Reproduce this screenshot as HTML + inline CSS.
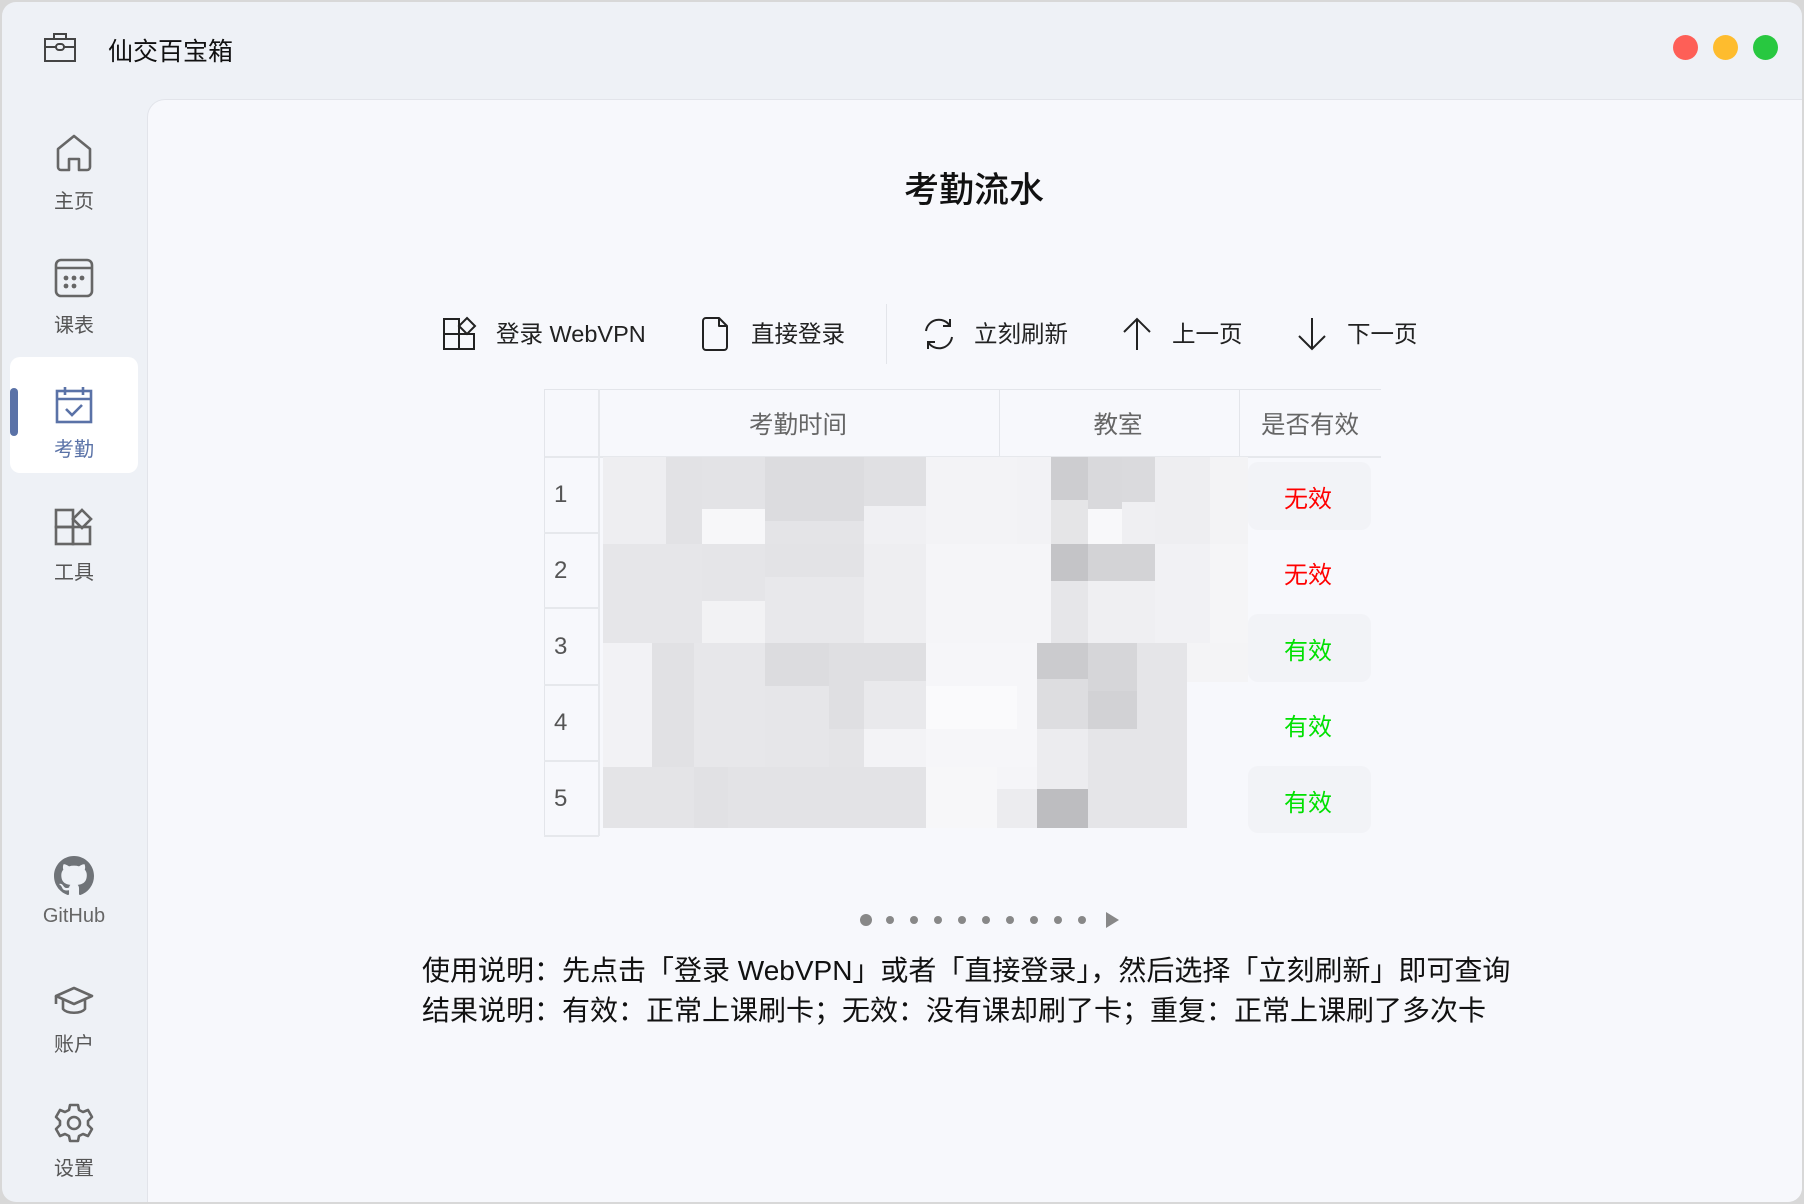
<!DOCTYPE html>
<html><head><meta charset="utf-8"><style>
*{margin:0;padding:0;box-sizing:border-box}
body{width:1804px;height:1204px;background:#d8d8d8;font-family:"Liberation Sans","Noto Sans CJK SC",sans-serif;position:relative;overflow:hidden}
.win{position:absolute;left:2px;top:2px;width:1800px;height:1200px;background:#eef1f6;border-radius:14px;overflow:hidden}
.abs{position:absolute}
.panel{position:absolute;left:145px;top:97px;width:1657px;height:1105px;background:#f7f8fc;border-left:1px solid #e2e4ea;border-top:1px solid #e2e4ea;border-top-left-radius:18px}
.lbl{position:absolute;width:100px;text-align:center;font-size:20px;color:#555;left:22px}
.ico{position:absolute;left:52px;width:40px;height:40px}
.tb{position:absolute;font-size:23.5px;color:#222;top:318px;line-height:32px;white-space:nowrap}
.tbi{position:absolute;top:316px;width:36px;height:36px}
.m{position:absolute}
.rn{position:absolute;left:554px;font-size:24px;color:#555}
.st{position:absolute;left:1282px;font-size:24px}
.dot{position:absolute;width:8px;height:8px;border-radius:50%;background:#888;top:916px}
</style></head><body>
<div class="win">
<svg class="abs" style="left:41px;top:29px" width="34" height="34" viewBox="0 0 34 34" fill="none" stroke="#444" stroke-width="2"><rect x="2" y="8" width="30" height="22"/><path d="M11 8V3h12v5M2 16h11M21 16h11"/><rect x="13" y="13" width="8" height="6" rx="3"/></svg>
<div class="abs" style="left:106px;top:30px;font-size:25px;color:#111">仙交百宝箱</div>
<div class="abs" style="left:1671px;top:33px;width:25px;height:25px;border-radius:50%;background:#fe5f57"></div>
<div class="abs" style="left:1711px;top:33px;width:25px;height:25px;border-radius:50%;background:#febc2e"></div>
<div class="abs" style="left:1751px;top:33px;width:25px;height:25px;border-radius:50%;background:#28c840"></div>

<svg class="ico" style="top:131px" viewBox="0 0 40 40" fill="none" stroke="#666" stroke-width="2.6" stroke-linejoin="round"><path d="M4 16L20 3l16 13v18a3 3 0 0 1-3 3h-8V26h-10v11H7a3 3 0 0 1-3-3z"/></svg>
<div class="lbl" style="top:183px">主页</div>
<svg class="ico" style="top:256px" viewBox="0 0 40 40" fill="none" stroke="#666" stroke-width="2.6"><rect x="2" y="2" width="36" height="36" rx="5"/><path d="M2 10h36"/><g fill="#666" stroke="none"><circle cx="12" cy="20" r="2.4"/><circle cx="20" cy="20" r="2.4"/><circle cx="28" cy="20" r="2.4"/><circle cx="12" cy="28" r="2.4"/><circle cx="20" cy="28" r="2.4"/></g></svg>
<div class="lbl" style="top:307px">课表</div>
<div class="abs" style="left:8px;top:355px;width:128px;height:116px;background:#fff;border-radius:10px"></div>
<div class="abs" style="left:8px;top:386px;width:8px;height:48px;background:#5a72a7;border-radius:4px"></div>
<svg class="ico" style="top:383px" viewBox="0 0 40 40" fill="none" stroke="#5a72a7" stroke-width="2.6"><rect x="3" y="6" width="34" height="31"/><path d="M3 14h34M11 2v8M29 2v8M12 24l6 6 10-10"/></svg>
<div class="lbl" style="top:431px;color:#5a72a7">考勤</div>
<svg class="ico" style="top:505px" viewBox="0 0 40 40" fill="none" stroke="#666" stroke-width="2.6"><rect x="2" y="20" width="17" height="17"/><rect x="19" y="20" width="17" height="17"/><rect x="2" y="3" width="17" height="17"/><path d="M28 3l9 9-9 9-9-9z"/></svg>
<div class="lbl" style="top:554px">工具</div>
<svg class="ico" style="top:854px" viewBox="0 0 16 16"><path fill="#6f7378" d="M8 0C3.58 0 0 3.58 0 8c0 3.54 2.29 6.53 5.47 7.59.4.07.55-.17.55-.38 0-.19-.01-.82-.01-1.49-2.01.37-2.53-.49-2.69-.94-.09-.23-.48-.94-.82-1.13-.28-.15-.68-.52-.01-.53.63-.01 1.08.58 1.23.82.72 1.21 1.87.87 2.33.66.07-.52.28-.87.51-1.07-1.78-.2-3.64-.89-3.64-3.95 0-.87.31-1.59.82-2.15-.08-.2-.36-1.02.08-2.12 0 0 .67-.21 2.2.82.64-.18 1.32-.27 2-.27.68 0 1.36.09 2 .27 1.53-1.04 2.2-.82 2.2-.82.44 1.1.16 1.92.08 2.12.51.56.82 1.27.82 2.15 0 3.07-1.87 3.75-3.65 3.95.29.25.54.73.54 1.48 0 1.07-.01 1.93-.01 2.2 0 .21.15.46.55.38A8.013 8.013 0 0016 8c0-4.42-3.58-8-8-8z"/></svg>
<div class="lbl" style="top:903px;color:#666">GitHub</div>
<svg class="ico" style="top:980px" viewBox="0 0 40 40" fill="none" stroke="#666" stroke-width="2.6" stroke-linejoin="round"><path d="M2 14L20 6l18 8-18 8z"/><path d="M9 18v9c4 5 18 5 22 0v-9M2 14v8"/></svg>
<div class="lbl" style="top:1026px">账户</div>
<svg class="ico" style="top:1101px" viewBox="0 0 40 40" fill="none" stroke="#666" stroke-width="2.6" stroke-linejoin="round"><path d="M16 2h8l1 5 4 2 5-2 4 7-4 4v4l4 4-4 7-5-2-4 2-1 5h-8l-1-5-4-2-5 2-4-7 4-4v-4L2 14l4-7 5 2 4-2z"/><circle cx="20" cy="20" r="6"/></svg>
<div class="lbl" style="top:1150px">设置</div>

<div class="panel"></div>
</div>

<div class="abs" style="left:874px;top:162px;width:200px;text-align:center;font-size:35px;color:#111;font-weight:500">考勤流水</div>

<svg class="tbi" style="left:442px" viewBox="0 0 36 36" fill="none" stroke="#222" stroke-width="2"><rect x="2" y="18" width="15" height="15"/><rect x="17" y="18" width="15" height="15"/><rect x="2" y="3" width="15" height="15"/><path d="M25 2l8 8-8 8-8-8z"/></svg>
<div class="tb" style="left:496px">登录 WebVPN</div>
<svg class="tbi" style="left:698px" viewBox="0 0 36 36" fill="none" stroke="#222" stroke-width="2" stroke-linejoin="round"><path d="M8 2h13l8 8v21a3 3 0 0 1-3 3H8a3 3 0 0 1-3-3V5a3 3 0 0 1 3-3z"/><path d="M21 2v8h8"/></svg>
<div class="tb" style="left:751px">直接登录</div>
<div class="abs" style="left:886px;top:304px;width:1px;height:60px;background:#e3e5ea"></div>
<svg class="tbi" style="left:921px" viewBox="0 0 36 36" fill="none" stroke="#222" stroke-width="2"><path d="M5 15A13 13 0 0 1 29 10M31 21A13 13 0 0 1 7 26"/><path d="M29 3v7h-7M7 33v-7h7"/></svg>
<div class="tb" style="left:974px">立刻刷新</div>
<svg class="tbi" style="left:1119px" viewBox="0 0 36 36" fill="none" stroke="#222" stroke-width="2"><path d="M18 34V3M5 16L18 3l13 13"/></svg>
<div class="tb" style="left:1172px">上一页</div>
<svg class="tbi" style="left:1294px" viewBox="0 0 36 36" fill="none" stroke="#222" stroke-width="2"><path d="M18 2v31M5 20l13 13 13-13"/></svg>
<div class="tb" style="left:1347px">下一页</div>

<div class="abs" style="left:544px;top:389px;width:837px;height:1px;background:#e3e5ea"></div>
<div class="abs" style="left:544px;top:456px;width:837px;height:2px;background:#e6e8ec"></div>
<div class="abs" style="left:544px;top:389px;width:1px;height:447px;background:#e3e5ea"></div>
<div class="abs" style="left:598px;top:389px;width:2px;height:447px;background:#e6e8ec"></div>
<div class="abs" style="left:999px;top:389px;width:1px;height:67px;background:#e3e5ea"></div>
<div class="abs" style="left:1239px;top:389px;width:1px;height:67px;background:#e3e5ea"></div>
<div class="abs" style="left:544px;top:532px;width:55px;height:2px;background:#e6e8ec"></div>
<div class="abs" style="left:544px;top:607px;width:55px;height:2px;background:#e6e8ec"></div>
<div class="abs" style="left:544px;top:684px;width:55px;height:2px;background:#e6e8ec"></div>
<div class="abs" style="left:544px;top:760px;width:55px;height:2px;background:#e6e8ec"></div>
<div class="abs" style="left:544px;top:835px;width:55px;height:2px;background:#e6e8ec"></div>
<div class="abs" style="left:698px;top:406px;width:200px;text-align:center;font-size:24.5px;color:#666">考勤时间</div>
<div class="abs" style="left:1068px;top:406px;width:100px;text-align:center;font-size:24.5px;color:#666">教室</div>
<div class="abs" style="left:1250px;top:406px;width:120px;text-align:center;font-size:24.5px;color:#666">是否有效</div>

<div class="abs" style="left:1248px;top:462px;width:123px;height:68px;background:#f2f3f7;border-radius:10px"></div>
<div class="abs" style="left:1248px;top:614px;width:123px;height:68px;background:#f2f3f7;border-radius:10px"></div>
<div class="abs" style="left:1248px;top:766px;width:123px;height:67px;background:#f2f3f7;border-radius:10px"></div>

<div class="m" style="left:603px;top:457px;width:63px;height:87px;background:#eeeef1"></div>
<div class="m" style="left:666px;top:457px;width:36px;height:87px;background:#e2e2e5"></div>
<div class="m" style="left:702px;top:457px;width:63px;height:52px;background:#e3e3e6"></div>
<div class="m" style="left:702px;top:509px;width:63px;height:35px;background:#f7f7f9"></div>
<div class="m" style="left:765px;top:457px;width:99px;height:64px;background:#dcdcdf"></div>
<div class="m" style="left:765px;top:521px;width:99px;height:23px;background:#e4e4e7"></div>
<div class="m" style="left:864px;top:457px;width:62px;height:49px;background:#e0e0e3"></div>
<div class="m" style="left:864px;top:506px;width:62px;height:38px;background:#f0f0f3"></div>
<div class="m" style="left:926px;top:457px;width:91px;height:87px;background:#f3f3f6"></div>
<div class="m" style="left:1017px;top:457px;width:34px;height:87px;background:#f2f2f5"></div>
<div class="m" style="left:1051px;top:457px;width:37px;height:43px;background:#cdcdd0"></div>
<div class="m" style="left:1051px;top:500px;width:37px;height:44px;background:#e5e5e7"></div>
<div class="m" style="left:1088px;top:457px;width:34px;height:52px;background:#d9d9dc"></div>
<div class="m" style="left:1088px;top:509px;width:34px;height:35px;background:#f8f8fa"></div>
<div class="m" style="left:1122px;top:457px;width:33px;height:45px;background:#dadadd"></div>
<div class="m" style="left:1122px;top:502px;width:33px;height:42px;background:#efeff2"></div>
<div class="m" style="left:1155px;top:457px;width:55px;height:87px;background:#eeeef1"></div>
<div class="m" style="left:1210px;top:457px;width:38px;height:87px;background:#f3f3f5"></div>

<div class="m" style="left:603px;top:544px;width:99px;height:99px;background:#e6e6e9"></div>
<div class="m" style="left:702px;top:544px;width:63px;height:57px;background:#e5e5e8"></div>
<div class="m" style="left:702px;top:601px;width:63px;height:42px;background:#f2f2f4"></div>
<div class="m" style="left:765px;top:544px;width:99px;height:33px;background:#e3e3e6"></div>
<div class="m" style="left:765px;top:577px;width:99px;height:66px;background:#e8e8eb"></div>
<div class="m" style="left:864px;top:544px;width:62px;height:99px;background:#eeeef1"></div>
<div class="m" style="left:926px;top:544px;width:125px;height:99px;background:#f5f5f8"></div>
<div class="m" style="left:1051px;top:544px;width:37px;height:37px;background:#c4c4c7"></div>
<div class="m" style="left:1051px;top:581px;width:37px;height:62px;background:#e6e6e9"></div>
<div class="m" style="left:1088px;top:544px;width:67px;height:37px;background:#d3d3d6"></div>
<div class="m" style="left:1088px;top:581px;width:67px;height:62px;background:#efeff2"></div>
<div class="m" style="left:1155px;top:544px;width:55px;height:99px;background:#f1f1f4"></div>
<div class="m" style="left:1210px;top:544px;width:38px;height:99px;background:#f5f5f7"></div>

<div class="m" style="left:603px;top:643px;width:49px;height:124px;background:#f2f2f5"></div>
<div class="m" style="left:652px;top:643px;width:42px;height:124px;background:#e1e1e4"></div>
<div class="m" style="left:694px;top:643px;width:71px;height:124px;background:#e7e7ea"></div>
<div class="m" style="left:765px;top:643px;width:64px;height:43px;background:#dcdcdf"></div>
<div class="m" style="left:765px;top:686px;width:64px;height:81px;background:#e6e6e9"></div>
<div class="m" style="left:829px;top:643px;width:35px;height:86px;background:#dfdfe2"></div>
<div class="m" style="left:829px;top:729px;width:35px;height:38px;background:#e4e4e7"></div>
<div class="m" style="left:864px;top:643px;width:62px;height:38px;background:#dfdfe2"></div>
<div class="m" style="left:864px;top:681px;width:62px;height:48px;background:#e9e9ec"></div>
<div class="m" style="left:864px;top:729px;width:62px;height:38px;background:#f3f3f6"></div>
<div class="m" style="left:926px;top:643px;width:111px;height:124px;background:#f6f6f9"></div>
<div class="m" style="left:926px;top:686px;width:91px;height:43px;background:#fafafc"></div>
<div class="m" style="left:1037px;top:643px;width:51px;height:36px;background:#cbcbce"></div>
<div class="m" style="left:1037px;top:679px;width:51px;height:50px;background:#dddde0"></div>
<div class="m" style="left:1037px;top:729px;width:51px;height:38px;background:#ececef"></div>
<div class="m" style="left:1088px;top:643px;width:49px;height:48px;background:#d6d6d9"></div>
<div class="m" style="left:1088px;top:691px;width:49px;height:38px;background:#d2d2d5"></div>
<div class="m" style="left:1088px;top:729px;width:49px;height:38px;background:#e5e5e8"></div>
<div class="m" style="left:1137px;top:643px;width:50px;height:124px;background:#e5e5e8"></div>
<div class="m" style="left:1187px;top:643px;width:61px;height:39px;background:#f4f4f6"></div>

<div class="m" style="left:603px;top:767px;width:91px;height:61px;background:#e4e4e7"></div>
<div class="m" style="left:694px;top:767px;width:34px;height:61px;background:#e1e1e4"></div>
<div class="m" style="left:728px;top:767px;width:198px;height:61px;background:#e3e3e6"></div>
<div class="m" style="left:926px;top:767px;width:71px;height:61px;background:#f7f7f9"></div>
<div class="m" style="left:997px;top:767px;width:40px;height:22px;background:#f5f5f8"></div>
<div class="m" style="left:997px;top:789px;width:40px;height:39px;background:#ececef"></div>
<div class="m" style="left:1037px;top:767px;width:51px;height:22px;background:#ececef"></div>
<div class="m" style="left:1037px;top:789px;width:51px;height:39px;background:#bdbdc0"></div>
<div class="m" style="left:1088px;top:767px;width:99px;height:61px;background:#e5e5e8"></div>

<div class="rn" style="top:481px">1</div>
<div class="rn" style="top:557px">2</div>
<div class="rn" style="top:633px">3</div>
<div class="rn" style="top:709px">4</div>
<div class="rn" style="top:785px">5</div>
<div class="st" style="top:479px;left:1284px;color:#ff0000">无效</div>
<div class="st" style="top:555px;left:1284px;color:#ff0000">无效</div>
<div class="st" style="top:631px;left:1284px;color:#00e000">有效</div>
<div class="st" style="top:707px;left:1284px;color:#00e000">有效</div>
<div class="st" style="top:783px;left:1284px;color:#00e000">有效</div>

<div class="abs" style="left:860px;top:914px;width:12px;height:12px;border-radius:50%;background:#888"></div>
<div class="dot" style="left:886px"></div><div class="dot" style="left:910px"></div><div class="dot" style="left:934px"></div><div class="dot" style="left:958px"></div><div class="dot" style="left:982px"></div><div class="dot" style="left:1006px"></div><div class="dot" style="left:1030px"></div><div class="dot" style="left:1054px"></div><div class="dot" style="left:1078px"></div>
<svg class="abs" style="left:1106px;top:912px" width="13" height="16" viewBox="0 0 13 16"><path d="M0 0L13 8 0 16z" fill="#888"/></svg>

<div class="abs" style="left:422px;top:951px;font-size:28px;color:#111;line-height:40px;white-space:nowrap">使用说明：先点击「登录 WebVPN」或者「直接登录」，然后选择「立刻刷新」即可查询<br>结果说明：有效：正常上课刷卡；无效：没有课却刷了卡；重复：正常上课刷了多次卡</div>
</body></html>
